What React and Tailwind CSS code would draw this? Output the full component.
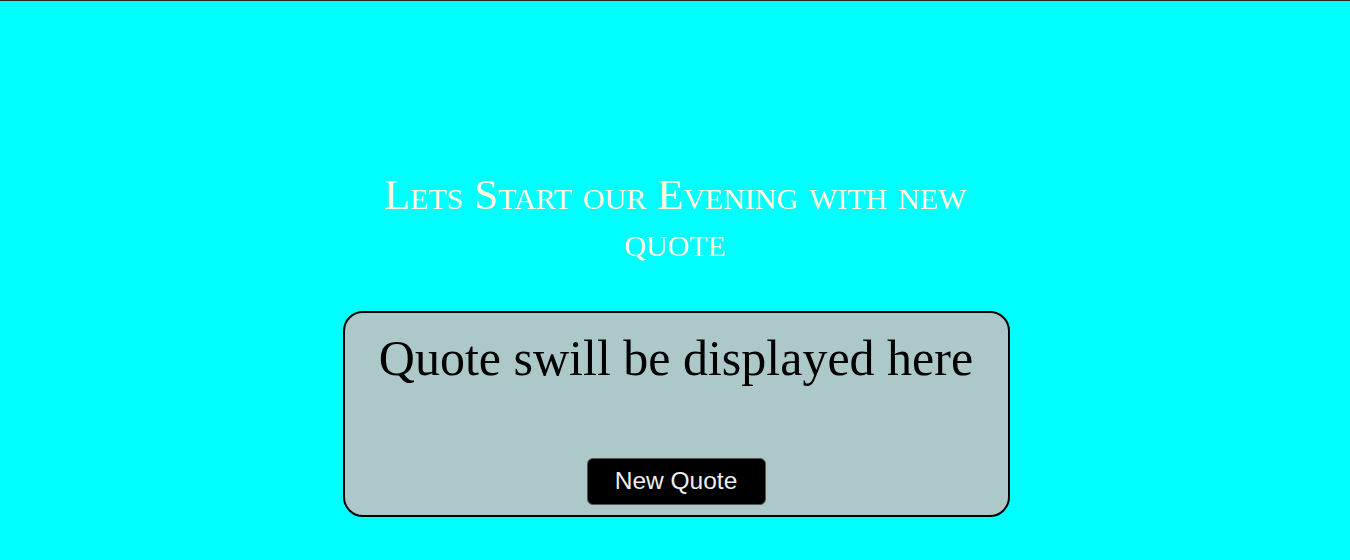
export default function App() {
  return (
    <div className="min-h-[560px] bg-[#00ffff] border-t border-[#2b2b2b] flex flex-col items-center">
      <h1 className="mt-[170px] w-[640px] text-center text-[43px] leading-[47px] font-normal text-[#fff8dc] [font-variant:small-caps] font-['Liberation_Serif','Times_New_Roman',serif]">
        Lets Start our Evening with new quote
      </h1>

      <div className="mt-[46px] ml-[2px] w-[667px] h-[206px] bg-[#adc8c9] border-2 border-black rounded-[20px] flex flex-col items-center">
        <p className="mt-[8px] text-[50px] text-black font-['Liberation_Serif','Times_New_Roman',serif]">
          Quote swill be displayed here
        </p>
        <button className="mt-auto mb-[10px] w-[179px] h-[47px] bg-black text-[#eeeeee] text-[24.5px] rounded-[6px] border border-[#555555] font-['Liberation_Sans',Arial,sans-serif]">
          New Quote
        </button>
      </div>
    </div>
  );
}
